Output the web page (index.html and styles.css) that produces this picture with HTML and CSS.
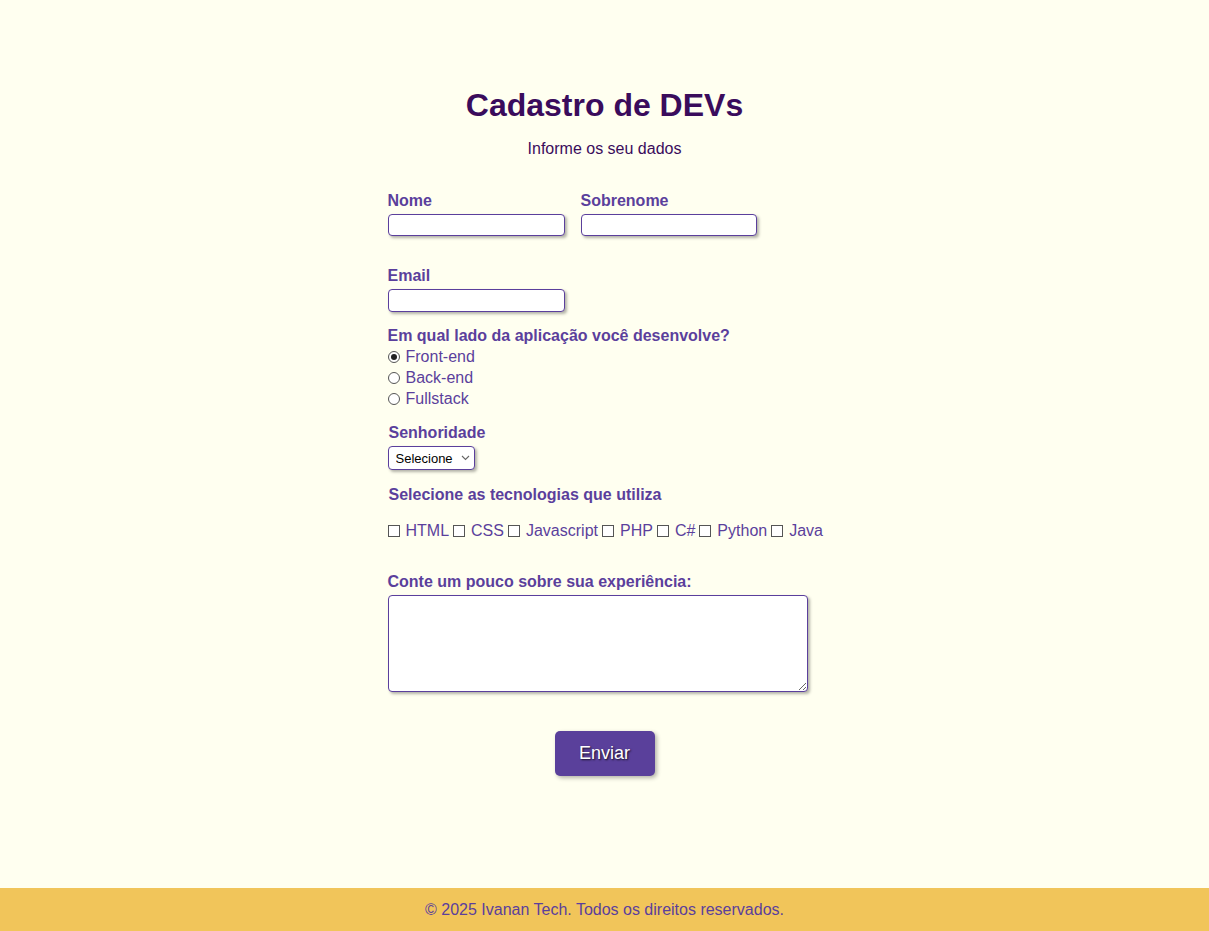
FILE: index.html
```html
<!DOCTYPE html>
<html lang="pt-BR">
<head>
<meta charset="UTF-8">
<title>Cadastro de DEVs</title>
<link rel="stylesheet" href="styles.css">
</head>
<body>
<main class="page">
  <div class="container">
    <h1 class="title">Cadastro de DEVs</h1>
    <p class="subtitle">Informe os seu dados</p>
    <form class="form">
      <div class="row row-names">
        <div class="field">
          <label class="label" for="nome">Nome</label>
          <input class="input input-name" id="nome" type="text">
        </div>
        <div class="field">
          <label class="label" for="sobrenome">Sobrenome</label>
          <input class="input input-last" id="sobrenome" type="text">
        </div>
      </div>
      <div class="field row-email">
        <label class="label" for="email">Email</label>
        <input class="input input-name" id="email" type="email">
      </div>
      <div class="field row-side">
        <span class="label">Em qual lado da aplicação você desenvolve?</span>
        <div class="radios">
          <label class="opt"><input class="radio" type="radio" name="lado" checked>Front-end</label>
          <label class="opt"><input class="radio" type="radio" name="lado">Back-end</label>
          <label class="opt"><input class="radio" type="radio" name="lado">Fullstack</label>
        </div>
      </div>
      <div class="field row-senior">
        <label class="label label-shift" for="senioridade">Senhoridade</label>
        <span class="select-wrap">
          <select class="select" id="senioridade">
            <option>Selecione</option>
            <option>Júnior</option>
            <option>Pleno</option>
            <option>Sênior</option>
          </select>
          <svg class="chev" width="9" height="6" viewBox="0 0 9 6"><path d="M1 1 L4.5 4.5 L8 1" fill="none" stroke="#666" stroke-width="1.1"/></svg>
        </span>
      </div>
      <div class="field row-tech">
        <span class="label label-shift">Selecione as tecnologias que utiliza</span>
        <div class="checks">
          <label class="opt"><input class="check" type="checkbox">HTML</label>
          <label class="opt"><input class="check" type="checkbox">CSS</label>
          <label class="opt"><input class="check" type="checkbox">Javascript</label>
          <label class="opt"><input class="check" type="checkbox">PHP</label>
          <label class="opt"><input class="check" type="checkbox">C#</label>
          <label class="opt"><input class="check" type="checkbox">Python</label>
          <label class="opt"><input class="check" type="checkbox">Java</label>
        </div>
      </div>
      <div class="field row-exp">
        <label class="label" for="exp">Conte um pouco sobre sua experiência:</label>
        <textarea class="textarea" id="exp"></textarea>
      </div>
      <div class="actions">
        <button class="button" type="submit">Enviar</button>
      </div>
    </form>
  </div>
</main>
<footer class="footer">© 2025 Ivanan Tech. Todos os direitos reservados.</footer>
</body>
</html>
```

FILE: styles.css
```css
* { box-sizing: border-box; }

html, body { margin: 0; padding: 0; }

body {
  background: #fffff0;
  font-family: "Liberation Sans", Arial, sans-serif;
  font-size: 16px;
  color: #5b3f9c;
  min-height: 100vh;
  display: flex;
  flex-direction: column;
}

.page {
  flex: 1;
  padding-top: 87px;
}

.container {
  width: 434px;
  margin: 0 auto;
}

.title {
  margin: 0;
  font-size: 32px;
  line-height: 37px;
  font-weight: bold;
  text-align: center;
  color: #3a0c5c;
}

.subtitle {
  margin: 16px 0 0;
  line-height: 18px;
  text-align: center;
  color: #3a0c5c;
}

.form {
  display: flex;
  flex-direction: column;
  margin-top: 34px;
}

.row-names {
  display: flex;
  gap: 16px;
}

.field {
  display: flex;
  flex-direction: column;
  align-items: flex-start;
}

.label {
  display: block;
  font-weight: bold;
  line-height: 18px;
  margin-bottom: 4px;
  color: #5b3f9c;
}

.label-shift { margin-left: 1px; }

.input {
  height: 22px;
  border: 1px solid #5b3f9c;
  border-radius: 4px;
  background: #fff;
  box-shadow: 2px 2px 3px rgba(0, 0, 0, 0.3);
  padding: 0 4px;
  font: inherit;
  font-size: 13px;
}

.input-name { width: 177px; }
.input-last { width: 176px; }

.row-email { margin-top: 31px; }
.row-email .input { height: 23px; }

.row-side { margin-top: 15px; }
.row-side .label { margin-bottom: 3px; }

.radios {
  display: flex;
  flex-direction: column;
  gap: 3px;
}

.opt {
  display: inline-flex;
  align-items: center;
  line-height: 18px;
  color: #5b3f9c;
}

.radio {
  appearance: none;
  -webkit-appearance: none;
  margin: 0 6px 0 0;
  width: 12px;
  height: 12px;
  border: 1px solid #555;
  border-radius: 50%;
  background: #fff;
  display: inline-grid;
  place-content: center;
}

.radio:checked::before {
  content: "";
  width: 6px;
  height: 6px;
  border-radius: 50%;
  background: #222;
}

.row-senior { margin-top: 16px; }

.select-wrap {
  position: relative;
  display: inline-block;
}

.select {
  appearance: none;
  -webkit-appearance: none;
  width: 87px;
  height: 24px;
  border: 1px solid #5b3f9c;
  border-radius: 4px;
  background: #fff;
  box-shadow: 2px 2px 3px rgba(0, 0, 0, 0.3);
  font-family: "Liberation Sans", Arial, sans-serif;
  font-size: 13px;
  color: #000;
  padding: 0 0 0 7px;
}

.chev {
  position: absolute;
  right: 5px;
  top: 9px;
  pointer-events: none;
}

.row-tech { margin-top: 16px; }
.row-tech .label { margin-bottom: 18px; }

.checks {
  display: flex;
  gap: 4px;
}

.check {
  appearance: none;
  -webkit-appearance: none;
  margin: 0 6px 0 0;
  width: 12px;
  height: 12px;
  border: 1px solid #555;
  border-radius: 0;
  background: #fff;
}

.row-exp { margin-top: 33px; }

.textarea {
  width: 420px;
  height: 97px;
  border: 1px solid #5b3f9c;
  border-radius: 4px;
  background: #fff;
  box-shadow: 2px 2px 3px rgba(0, 0, 0, 0.3);
  font: inherit;
}

.actions {
  display: flex;
  justify-content: center;
  margin-top: 39px;
}

.button {
  width: 100px;
  height: 45px;
  border: none;
  border-radius: 5px;
  background: #5a409b;
  color: #fff;
  font-family: "Liberation Sans", Arial, sans-serif;
  font-size: 18px;
  text-shadow: 1px 1px 2px rgba(0, 0, 0, 0.8);
  box-shadow: 2px 2px 4px rgba(0, 0, 0, 0.3);
  cursor: pointer;
}

.footer {
  height: 43px;
  background: #f1c55a;
  color: #5b3f9c;
  display: flex;
  align-items: center;
  justify-content: center;
  font-size: 16px;
}
```
